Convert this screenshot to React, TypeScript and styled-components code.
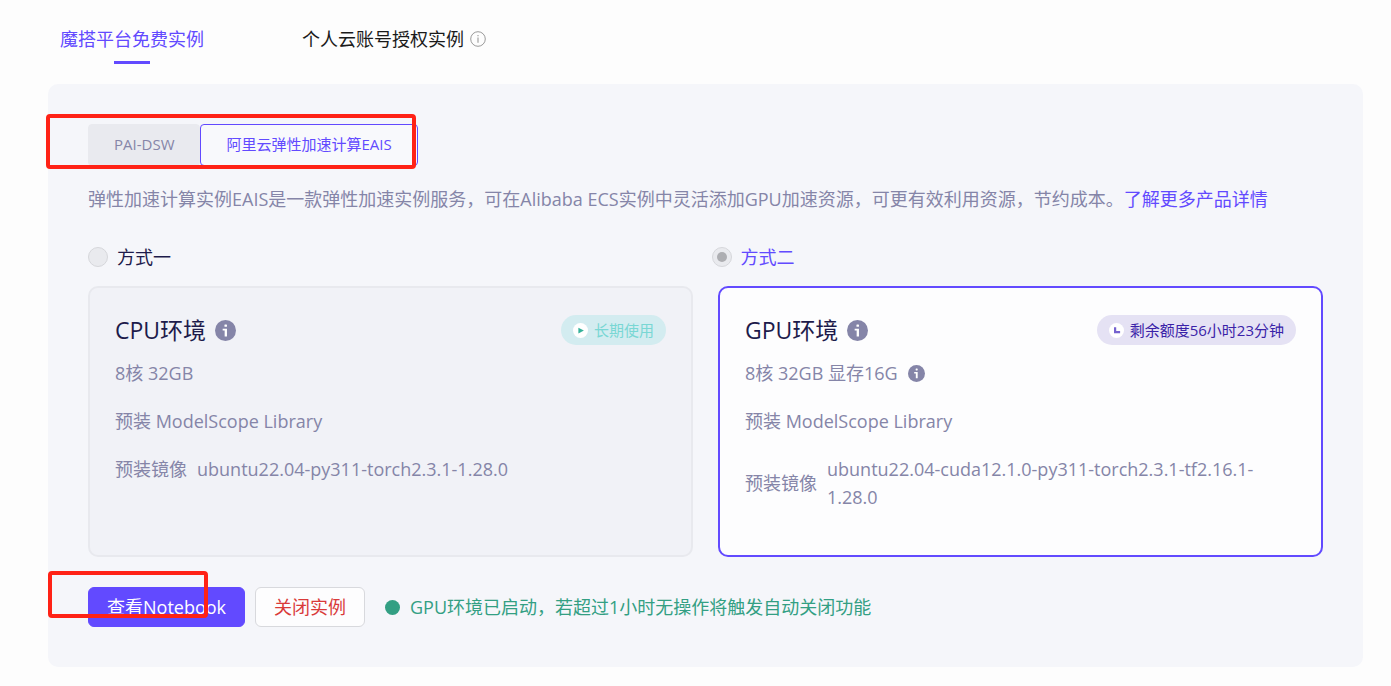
import React from "react";
import styled, { createGlobalStyle } from "styled-components";

const colors = {
  accent: "#624aff",
  ink: "#1d1b4b",
  muted: "#8585a8",
  green: "#339f83",
  danger: "#d93a3a",
  mark: "#ff2216",
};

const GlobalStyle = createGlobalStyle`
  * { box-sizing: border-box; }
  body {
    margin: 0;
    background: #fdfdfd;
    color: ${colors.ink};
    font-family: "Open Sans", "Noto Sans CJK SC", sans-serif;
    font-size: 18px;
    font-weight: 400;
    line-height: 28px;
  }
  button { font: inherit; cursor: pointer; }
`;

const Page = styled.main`
  padding: 20px 28px 16px 48px;
`;

const Tabs = styled.div`
  display: flex;
  align-items: flex-start;
  gap: 98px;
  height: 64px;
  padding-left: 12px;
`;

const Tab = styled.button<{ $active?: boolean }>`
  display: flex;
  flex-direction: column;
  align-items: center;
  gap: 8px;
  height: 44px;
  padding: 5px 0 0;
  border: 0;
  background: none;
  white-space: nowrap;
  color: ${(p) => (p.$active ? colors.accent : "#1a1a1a")};

  &::after {
    content: "";
    width: 36px;
    height: 3px;
    background: ${(p) => (p.$active ? colors.accent : "transparent")};
  }
`;

const TabLabel = styled.span`
  display: flex;
  align-items: center;
  gap: 6px;
`;

const Panel = styled.section`
  padding: 40px;
  border-radius: 10px;
  background: #f5f6fa;
`;

const Marked = styled.div`
  position: relative;
  display: flex;
  width: fit-content;
`;

const Mark = styled.span<{ $top: number; $left: number; $right: number; $bottom: number }>`
  position: absolute;
  top: ${(p) => p.$top}px;
  left: ${(p) => p.$left}px;
  right: ${(p) => p.$right}px;
  bottom: ${(p) => p.$bottom}px;
  border: 4px solid ${colors.mark};
  border-radius: 4px;
  pointer-events: none;
`;

const Segment = styled.button<{ $active?: boolean }>`
  height: 42px;
  padding: 0 25px 2px;
  border: 1px solid ${(p) => (p.$active ? colors.accent : "#e9eaef")};
  border-radius: 4px;
  background: ${(p) => (p.$active ? "#f8f9fc" : "#e9eaef")};
  color: ${(p) => (p.$active ? colors.accent : colors.muted)};
  font-size: 15px;
  white-space: nowrap;
`;

const Description = styled.p`
  margin: 19px 0 0;
  color: ${colors.muted};
`;

const Link = styled.a`
  color: ${colors.accent};
  text-decoration: none;
`;

const RadioRow = styled.div`
  display: grid;
  grid-template-columns: 1fr 1fr;
  gap: 12px;
  margin-top: 30px;
`;

const RadioLabel = styled.label<{ $active?: boolean }>`
  display: flex;
  align-items: center;
  gap: 9px;
  color: ${(p) => (p.$active ? colors.accent : colors.ink)};
`;

const Radio = styled.input`
  appearance: none;
  display: grid;
  place-items: center;
  width: 20px;
  height: 20px;
  margin: 0;
  border: 1px solid #d6d7db;
  border-radius: 50%;
  background: #e9eaee;

  &:checked::before {
    content: "";
    width: 10px;
    height: 10px;
    border-radius: 50%;
    background: #adaeb2;
  }
`;

const Cards = styled.div`
  display: grid;
  grid-template-columns: 1fr 1fr;
  gap: 25px;
  margin-top: 15px;
`;

const Card = styled.article<{ $active?: boolean }>`
  display: flex;
  flex-direction: column;
  gap: 20px;
  min-height: 271px;
  padding: 26px 25px;
  border: 2px solid ${(p) => (p.$active ? colors.accent : "#e8e9ee")};
  border-radius: 10px;
  background: ${(p) => (p.$active ? "#fdfdfe" : "#f1f2f7")};
  color: ${colors.muted};
`;

const CardHead = styled.header`
  display: flex;
  align-items: center;
  justify-content: space-between;
  height: 32px;
  margin-bottom: -7px;
`;

const Title = styled.h2`
  display: flex;
  align-items: center;
  gap: 9px;
  margin: 0;
  color: ${colors.ink};
  font-size: 23px;
  font-weight: 400;
  line-height: 32px;
`;

const Pill = styled.span<{ $tone: "teal" | "violet" }>`
  display: flex;
  align-items: center;
  gap: 6px;
  height: 30px;
  padding: 0 12px;
  border-radius: 15px;
  background: ${(p) => (p.$tone === "teal" ? "#d3ecf0" : "#e5e2f4")};
  color: ${(p) => (p.$tone === "teal" ? "#79d7d4" : "#3a22a8")};
  font-size: 15px;
`;

const Row = styled.div`
  display: flex;
  align-items: center;
  gap: 10px;
`;

const ImageLabel = styled.span`
  flex: none;
`;

const Actions = styled.footer`
  display: flex;
  align-items: center;
  gap: 10px;
  margin-top: 30px;
`;

const Button = styled.button<{ $primary?: boolean }>`
  height: 40px;
  padding: 0 18px;
  border: 1px solid ${(p) => (p.$primary ? colors.accent : "#d8d9dd")};
  border-radius: 6px;
  background: ${(p) => (p.$primary ? colors.accent : "#fdfdfe")};
  color: ${(p) => (p.$primary ? "#ffffff" : colors.danger)};
  white-space: nowrap;
`;

const Status = styled.p`
  display: flex;
  align-items: center;
  gap: 10px;
  margin: 0 0 0 10px;
  color: ${colors.green};

  &::before {
    content: "";
    width: 15px;
    height: 15px;
    border-radius: 50%;
    background: ${colors.green};
  }
`;

const InfoSolid = ({ size }: { size: number }) => (
  <svg width={size} height={size} viewBox="0 0 20 20" aria-hidden="true">
    <circle cx="10" cy="10" r="10" fill={colors.muted} />
    <rect x="9" y="4.2" width="2.4" height="2.3" rx=".5" fill="#fff" />
    <path d="M7.3 8.3h4.1v7.3H9.2V10H7.3z" fill="#fff" />
  </svg>
);

const InfoOutline = () => (
  <svg width="16" height="16" viewBox="0 0 16 16" aria-hidden="true">
    <circle cx="8" cy="8" r="7.3" fill="none" stroke="#9a9a9a" />
    <path d="M8 6.6v5.2M8 4v1.3" stroke="#9a9a9a" strokeWidth="1.1" />
  </svg>
);

const PlayIcon = () => (
  <svg width="15" height="15" viewBox="0 0 15 15" aria-hidden="true">
    <circle cx="7.5" cy="7.5" r="7.5" fill="#fff" />
    <path d="M5.4 4.8 10.9 7.6 5.4 10.4z" fill="#35b199" />
  </svg>
);

const ClockIcon = () => (
  <svg width="15" height="15" viewBox="0 0 15 15" aria-hidden="true">
    <circle cx="7.5" cy="7.5" r="7.5" fill="#fff" />
    <path d="M6.1 4.2v4.9h5" fill="none" stroke="#7562cf" strokeWidth="2.2" />
  </svg>
);

export default function App() {
  return (
    <>
      <GlobalStyle />
      <Page>
        <Tabs role="tablist">
          <Tab role="tab" aria-selected="true" $active>
            <TabLabel>魔搭平台免费实例</TabLabel>
          </Tab>
          <Tab role="tab" aria-selected="false">
            <TabLabel>
              个人云账号授权实例
              <InfoOutline />
            </TabLabel>
          </Tab>
        </Tabs>
        <Panel>
          <Marked>
            <Segment>PAI-DSW</Segment>
            <Segment $active>阿里云弹性加速计算EAIS</Segment>
            <Mark $top={-10} $left={-42} $right={2} $bottom={-3} />
          </Marked>
          <Description>
            弹性加速计算实例EAIS是一款弹性加速实例服务，可在Alibaba ECS实例中灵活添加GPU加速资源，可更有效利用资源，节约成本。
            <Link href="#eais">了解更多产品详情</Link>
          </Description>
          <RadioRow>
            <RadioLabel>
              <Radio type="radio" name="mode" disabled />
              方式一
            </RadioLabel>
            <RadioLabel $active>
              <Radio type="radio" name="mode" defaultChecked disabled />
              方式二
            </RadioLabel>
          </RadioRow>
          <Cards>
            <Card>
              <CardHead>
                <Title>
                  CPU环境
                  <InfoSolid size={21} />
                </Title>
                <Pill $tone="teal">
                  <PlayIcon />
                  长期使用
                </Pill>
              </CardHead>
              <Row>8核 32GB</Row>
              <Row>预装 ModelScope Library</Row>
              <Row>
                <ImageLabel>预装镜像</ImageLabel>
                <span>ubuntu22.04-py311-torch2.3.1-1.28.0</span>
              </Row>
            </Card>
            <Card $active>
              <CardHead>
                <Title>
                  GPU环境
                  <InfoSolid size={21} />
                </Title>
                <Pill $tone="violet">
                  <ClockIcon />
                  剩余额度56小时23分钟
                </Pill>
              </CardHead>
              <Row>
                8核 32GB 显存16G
                <InfoSolid size={17} />
              </Row>
              <Row>预装 ModelScope Library</Row>
              <Row>
                <ImageLabel>预装镜像</ImageLabel>
                <span>ubuntu22.04-cuda12.1.0-py311-torch2.3.1-tf2.16.1-1.28.0</span>
              </Row>
            </Card>
          </Cards>
          <Actions>
            <Marked>
              <Button $primary>查看Notebook</Button>
              <Mark $top={-16} $left={-40} $right={37} $bottom={9} />
            </Marked>
            <Button>关闭实例</Button>
            <Status>GPU环境已启动，若超过1小时无操作将触发自动关闭功能</Status>
          </Actions>
        </Panel>
      </Page>
    </>
  );
}
